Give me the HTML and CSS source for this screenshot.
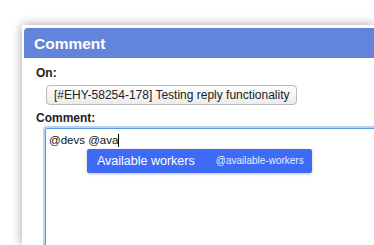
FILE: index.html
```html
<!DOCTYPE html>
<html lang="en">
<head>
  <meta charset="UTF-8" />
  <title>Comment</title>
  <link rel="stylesheet" href="styles.css">
</head>
<body>
  <div class="dialog">
    <div class="dialog-header">Comment</div>

    <div class="dialog-body">
      <div class="field-label">On:</div>
      <button class="ref-button">[#EHY-58254-178] Testing reply functionality</button>

      <div class="field-label comment-label">Comment:</div>
      <div class="editor">
        <span class="editor-text">@devs @ava</span><span class="caret"></span>

        <!-- mention suggestions -->
        <div class="mention-menu">
          <span class="mention-name">Available workers</span>
          <span class="mention-handle">@available-workers</span>
        </div>
      </div>
    </div>
  </div>
</body>
</html>
```

FILE: styles.css
```css
* { margin: 0; padding: 0; box-sizing: border-box; }

body {
  background: #fff;
  font-family: 'Liberation Sans', Arial, sans-serif;
  overflow: hidden;
  height: 245px;
}

/* dialog is cut by the window on the right and bottom */
.dialog {
  margin: 25px 0 0 22px;
  width: 352px;
  height: 220px;
  padding: 3px 0 0 2px;
  background: #fff;
  box-shadow: 0 0 10px rgba(0, 0, 0, 0.38);
  overflow: hidden;
}

.dialog-header {
  height: 30px;
  line-height: 31px;
  padding-left: 10px;
  background: #6284db;
  border-radius: 4px 0 0 0;
  color: #fff;
  font-size: 15.5px;
  font-weight: bold;
}

.dialog-body {
  padding: 8px 0 0 12px;
}

.field-label {
  font-size: 12px;
  font-weight: bold;
  line-height: 14px;
  color: #222;
}

.ref-button {
  display: block;
  margin: 5px 0 0 10px;
  height: 20px;
  padding: 0 7px;
  font-family: 'Liberation Sans', Arial, sans-serif;
  font-size: 12px;
  color: #222;
  background: linear-gradient(#fdfdfd, #ececec);
  border: 1px solid #b9b9b9;
  border-radius: 4px;
}

.comment-label {
  margin-top: 6px;
}

.editor {
  position: relative;
  margin: 3px 0 0 9px;
  width: 360px;
  height: 140px;
  padding: 4px 3px;
  border: 1px solid #5c9ae8;
  border-radius: 2px;
  box-shadow: 0 0 0 2px #b6d4f5;
  font-size: 11.5px;
  line-height: 14px;
  color: #111;
}

.caret {
  display: inline-block;
  width: 1px;
  height: 13px;
  background: #000;
  vertical-align: -3px;
}

.mention-menu {
  position: absolute;
  left: 41px;
  top: 20px;
  width: 225px;
  height: 24px;
  display: flex;
  align-items: center;
  gap: 21px;
  padding-left: 10px;
  background: #3d6bf6;
  border-radius: 2px;
  box-shadow: 0 1px 3px rgba(0, 0, 0, 0.25);
  color: #fff;
}

.mention-name {
  font-size: 12.5px;
}

.mention-handle {
  font-size: 10px;
  color: #e6ebff;
}
```
